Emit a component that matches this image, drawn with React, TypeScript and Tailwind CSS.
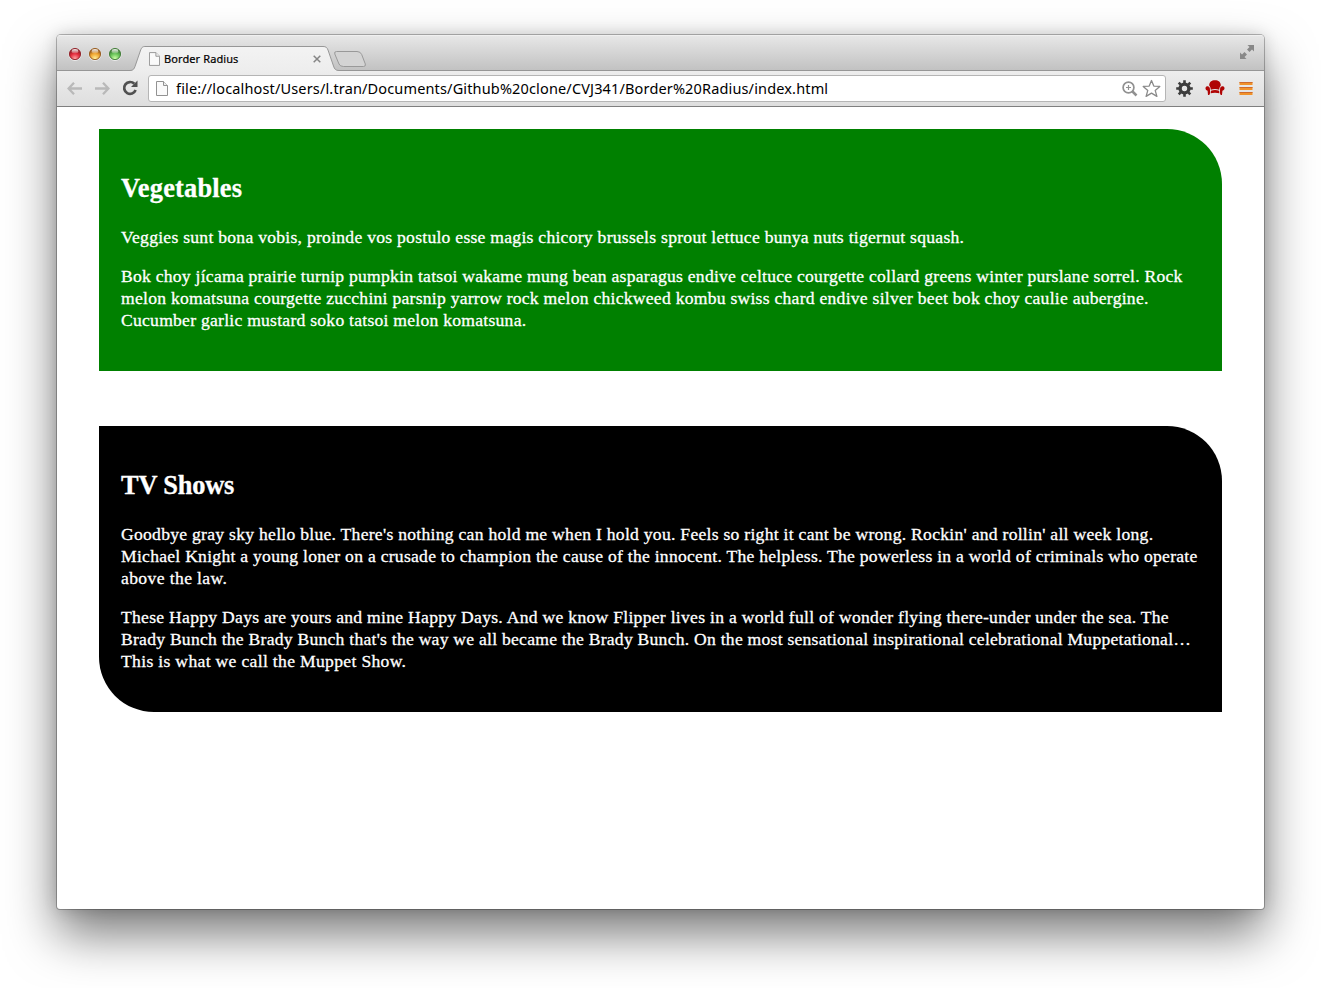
import React from "react";

const Line = ({ s, children }: { s: string; children: React.ReactNode }) => (
  <span className={`block w-fit whitespace-nowrap ${s}`}>{children}</span>
);

const PageIcon = ({ className }: { className: string }) => (
  <svg className={className} viewBox="0 0 12 15" fill="#fafafa" stroke="#929292">
    <path d="M.5.5h7l4 4v10H.5z" />
    <path d="M7.5.5v4h4" fill="#eee" />
  </svg>
);

const Light = ({ id, edge, base, glow }: { id: string; edge: string; base: string; glow: string }) => (
  <svg className="size-3.5" viewBox="0 0 14 14">
    <defs>
      <radialGradient id={id} cx=".5" cy=".9" r=".75">
        <stop offset="0" stopColor={glow} />
        <stop offset=".6" stopColor={base} />
        <stop offset="1" stopColor={edge} />
      </radialGradient>
      <linearGradient id={id + "h"} x2="0" y2="1">
        <stop offset="0" stopColor="#fff" stopOpacity=".95" />
        <stop offset="1" stopColor="#fff" stopOpacity=".15" />
      </linearGradient>
    </defs>
    <circle cx="7" cy="7.5" r="6" fill="none" stroke="#fff" strokeOpacity=".6" />
    <circle cx="7" cy="7" r="5.6" fill={`url(#${id})`} stroke={edge} strokeWidth=".9" />
    <ellipse cx="7" cy="4.2" rx="3.3" ry="2.2" fill={`url(#${id}h)`} />
  </svg>
);

const TabStrip = () => (
  <div className="flex h-[35px] shrink-0 bg-linear-to-b from-[#e8e8e8] to-[#c2c2c2] shadow-[inset_0_1px_0_#f0f0f0]">
    <div className="flex w-[75px] gap-1.5 pt-3 pl-[11px]">
      <Light id="red" edge="#8f1f26" base="#e3293a" glow="#ffa3a3" />
      <Light id="amber" edge="#96591c" base="#f0a52f" glow="#fff09a" />
      <Light id="green" edge="#3f7a35" base="#66c257" glow="#ccffa6" />
    </div>
    <div className="relative h-9 w-[205px]">
      <svg className="absolute top-[10px] left-0 h-[27px] w-[205px] overflow-visible" viewBox="0 0 205 27">
        <defs>
          <linearGradient id="tab" x2="0" y2="1">
            <stop offset="0" stopColor="#f3f3f3" />
            <stop offset="1" stopColor="#ededed" />
          </linearGradient>
        </defs>
        <path
          d="M-2 25.500C1.500 25.500 2.200 23.500 3 21.500L8.300 6C9.500 2.500 10.500 1.500 13 1.500H191C194 1.500 195 2.500 196 5L201.500 21C202.500 24 203.500 25.500 207 25.500V27H-2Z"
          fill="url(#tab)"
        />
        <path
          d="M-2 25.500C1.500 25.500 2.200 23.500 3 21.500L8.300 6C9.500 2.500 10.500 1.500 13 1.500H191C194 1.500 195 2.500 196 5L201.500 21C202.500 24 203.500 25.500 207 25.500"
          fill="none"
          stroke="#979797"
        />
      </svg>
      <div className="relative flex h-full pt-[17px] pl-[17px]">
        <PageIcon className="h-[14px] w-[11px]" />
        <span className="ml-1 w-fit text-[11px] leading-[14px] tracking-[0.1px] whitespace-nowrap text-black [-webkit-text-stroke:0.2px_black]">
          Border Radius
        </span>
      </div>
      <svg className="absolute top-[20px] left-[181px] size-2" viewBox="0 0 8 8" stroke="#858585" strokeWidth="1.5">
        <path d="M.7.7l6.600 6.600M7.300.7L.7 7.300" />
      </svg>
    </div>
    <svg className="-ml-1 mt-4 h-[17px] w-[34px]" viewBox="0 0 34 17" fill="#d4d4d4" stroke="#999">
      <path d="M3.500.5H24Q27.500.5 28.700 3.500L32.300 13Q33 15.500 30.500 15.500H10.500Q7 15.500 6 13L1.800 3Q1 .5 3.500.5Z" />
    </svg>
    <svg className="mt-[10px] mr-[10px] ml-auto size-[14px]" viewBox="0 0 14 14">
      <path
        d="M7.500 0H14v6.500L12 4.500 9.500 7 7 4.500 9.500 2zM0 7.500l2 2L4.500 7 7 9.500 4.500 12l2 2H0z"
        fill="#888"
      />
    </svg>
  </div>
);

const Toolbar = () => (
  <div className="flex h-[37px] shrink-0 items-start border-t border-b border-t-[#969696] border-b-[#7f7f7f] bg-linear-to-b from-[#ededed] to-[#dedede]">
    <svg className="mt-[11px] ml-[10px] h-[13px] w-[15px]" viewBox="0 0 15 13" fill="none" stroke="#b9b9b9" strokeWidth="2.300">
      <path d="M7 .8L1.600 6.500 7 12.200M2 6.500H15" />
    </svg>
    <svg className="mt-[11px] ml-[13px] h-[13px] w-[15px]" viewBox="0 0 15 13" fill="none" stroke="#b9b9b9" strokeWidth="2.300">
      <path d="M8 .8L13.400 6.500 8 12.200M13 6.500H0" />
    </svg>
    <svg className="mt-[9px] ml-[12px] size-4" viewBox="0 0 16 16">
      <path d="M12.300 3.800A5.900 5.900 0 1 0 13.600 10" fill="none" stroke="#505050" strokeWidth="2.700" />
      <path d="M15.500.6V7H9z" fill="#505050" />
    </svg>
    <div className="mt-[4px] ml-[10px] flex h-[27px] w-[1018px] rounded-[3px] border border-[#b5b5b5] bg-white">
      <PageIcon className="mt-[5px] ml-[7px] h-[15px] w-[12px]" />
      <span className="ml-[8px] w-fit font-['Noto_Sans'] text-[14.5px] leading-[25px] tracking-[0.15px] whitespace-nowrap text-black">
        file://localhost/Users/l.tran/Documents/Github%20clone/CVJ341/Border%20Radius/index.html
      </span>
      <svg className="mt-[5px] ml-auto size-4" viewBox="0 0 16 16" fill="none" stroke="#919191">
        <circle cx="6.500" cy="6.500" r="5.400" strokeWidth="1.700" />
        <path d="M4 6.500h5M6.500 4v5" strokeWidth="1.200" />
        <path d="M10.500 10.500l4 4" strokeWidth="2.500" />
      </svg>
      <svg className="mt-[3px] mr-1 ml-[4px] h-[19px] w-[19px]" viewBox="0 0 19 19" fill="none" stroke="#8a8a8a" strokeWidth="1.300">
        <path d="M9.500 1.500l2.300 5.600 6 .3-4.600 4 1.700 6-5.400-3.300-5.400 3.300 1.700-6-4.600-4 6-.3z" strokeLinejoin="round" />
      </svg>
    </div>
    <svg className="mt-[9px] ml-[10px] size-[17px]" viewBox="-8.500 -8.500 17 17">
      <g fill="none" stroke="#3d3d3d">
        <circle r="4.400" strokeWidth="3.400" />
        <path
          d="M0-8.300v3M0 8.300v-3M-8.300 0h3M8.300 0h-3M-5.800-5.800l2 2M5.800 5.800l-2-2M-5.800 5.800l2-2M5.800-5.800l-2 2"
          strokeWidth="2.600"
        />
      </g>
    </svg>
    <svg className="mt-[9px] ml-[12px] h-[16px] w-[20px]" viewBox="0 0 20 16">
      <path
        d="M4.200 5.500C4.200 2 6.600.3 10 .3s5.800 1.700 5.800 5.200C14.600 6.600 14.400 8 14.200 9.800c-2.700-1-5.700-1-8.400 0C5.600 8 5.400 6.600 4.200 5.500Z"
        fill="#b00404"
      />
      <path d="M5.900 10.700c2.600-1.100 5.600-1.100 8.200 0l.2 2.600c-2.600-.8-6-.8-8.600 0Z" fill="#b00404" />
      <path d="M.6 7.400C1.400 5.800 4.500 5.700 4.900 8.500L5.100 13 4.300 15H3L2.600 10.800C1 10.300.1 8.800.6 7.400ZM19.400 7.400C18.600 5.800 15.500 5.700 15.100 8.500L14.900 13l.8 2H17l.4-4.200C19 10.300 19.900 8.800 19.400 7.400Z" fill="#b00404" />
    </svg>
    <svg className="mt-[10px] ml-[14px] h-[14px] w-[14px]" viewBox="0 0 14 14">
      <path d="M.5 1h13v3H.5zM.5 6h13v3H.5zM.5 11h13v3H.5z" fill="#f0922a" />
      <path d="M.5 1.500h13M.5 6.500h13M.5 11.500h13" stroke="#cf6a2c" />
    </svg>
  </div>
);

export default function App() {
  return (
    <div className="h-[988px] w-[1321px] overflow-hidden bg-white pt-[35px] pl-[57px] font-['Noto_Sans',sans-serif]">
      <div className="flex h-[874px] w-[1207px] flex-col overflow-hidden rounded-t-[4px] rounded-b-[3px] bg-white shadow-[0_0_0_1px_rgba(0,0,0,0.26),0_25px_50px_rgba(0,0,0,0.53),0_0_16px_rgba(0,0,0,0.16)]">
        <TabStrip />
        <Toolbar />
        <main className="flex flex-col gap-[55px] px-[42px] pt-[22px] font-['Liberation_Serif','Times_New_Roman',serif] text-[17.6px] leading-[22px] text-white [-webkit-text-stroke:0.3px_white]">
          <section className="h-[242px] rounded-tr-[55px] bg-[#008000] px-[22px] pt-[44px]">
            <h2 className="text-[26.4px] leading-[31px] font-bold">
              <Line s="tracking-[0.2px]">Vegetables</Line>
            </h2>
            <p className="mt-[22px]">
              <Line s="tracking-[0.262px]">Veggies sunt bona vobis, proinde vos postulo esse magis chicory brussels sprout lettuce bunya nuts tigernut squash.</Line>
            </p>
            <p className="mt-[17px]">
              <Line s="tracking-[0.248px]">Bok choy jícama prairie turnip pumpkin tatsoi wakame mung bean asparagus endive celtuce courgette collard greens winter purslane sorrel. Rock</Line>
              <Line s="tracking-[0.254px]">melon komatsuna courgette zucchini parsnip yarrow rock melon chickweed kombu swiss chard endive silver beet bok choy caulie aubergine.</Line>
              <Line s="tracking-[0.25px]">Cucumber garlic mustard soko tatsoi melon komatsuna.</Line>
            </p>
          </section>
          <section className="h-[286px] rounded-tr-[55px] rounded-bl-[55px] bg-black px-[22px] pt-[44px]">
            <h2 className="text-[26.4px] leading-[31px] font-bold">
              <Line s="tracking-[-0.2px]">TV Shows</Line>
            </h2>
            <p className="mt-[22px]">
              <Line s="tracking-[0.27px]">Goodbye gray sky hello blue. There's nothing can hold me when I hold you. Feels so right it cant be wrong. Rockin' and rollin' all week long.</Line>
              <Line s="tracking-[0.264px]">Michael Knight a young loner on a crusade to champion the cause of the innocent. The helpless. The powerless in a world of criminals who operate</Line>
              <Line s="tracking-[0.38px]">above the law.</Line>
            </p>
            <p className="mt-[17px]">
              <Line s="tracking-[0.28px]">These Happy Days are yours and mine Happy Days. And we know Flipper lives in a world full of wonder flying there-under under the sea. The</Line>
              <Line s="tracking-[0.247px]">Brady Bunch the Brady Bunch that's the way we all became the Brady Bunch. On the most sensational inspirational celebrational Muppetational…</Line>
              <Line s="tracking-[0.32px]">This is what we call the Muppet Show.</Line>
            </p>
          </section>
        </main>
      </div>
    </div>
  );
}
